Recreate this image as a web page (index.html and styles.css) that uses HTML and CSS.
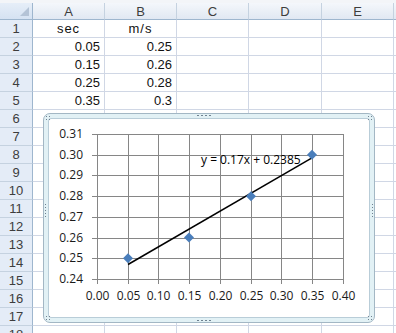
FILE: index.html
```html
<!DOCTYPE html>
<html lang="ja">
<head>
    <meta charset="UTF-8">
    <title>Book1 - Sheet1</title>
    <link rel="stylesheet" href="styles.css">
</head>
<body>
    <div class="sheet">
        <div class="corner"></div><div class="hd">A</div><div class="hd">B</div><div class="hd">C</div><div class="hd">D</div><div class="hd">E</div><div class="hd"></div>
        <div class="rh">1</div><div class="c ctr">sec</div><div class="c ctr">m/s</div><div class="c"></div><div class="c"></div><div class="c"></div><div class="c"></div>
        <div class="rh">2</div><div class="c num">0.05</div><div class="c num">0.25</div><div class="c"></div><div class="c"></div><div class="c"></div><div class="c"></div>
        <div class="rh">3</div><div class="c num">0.15</div><div class="c num">0.26</div><div class="c"></div><div class="c"></div><div class="c"></div><div class="c"></div>
        <div class="rh">4</div><div class="c num">0.25</div><div class="c num">0.28</div><div class="c"></div><div class="c"></div><div class="c"></div><div class="c"></div>
        <div class="rh">5</div><div class="c num">0.35</div><div class="c num">0.3</div><div class="c"></div><div class="c"></div><div class="c"></div><div class="c"></div>
        <div class="rh">6</div><div class="c"></div><div class="c"></div><div class="c"></div><div class="c"></div><div class="c"></div><div class="c"></div>
        <div class="rh">7</div><div class="c"></div><div class="c"></div><div class="c"></div><div class="c"></div><div class="c"></div><div class="c"></div>
        <div class="rh">8</div><div class="c"></div><div class="c"></div><div class="c"></div><div class="c"></div><div class="c"></div><div class="c"></div>
        <div class="rh">9</div><div class="c"></div><div class="c"></div><div class="c"></div><div class="c"></div><div class="c"></div><div class="c"></div>
        <div class="rh">10</div><div class="c"></div><div class="c"></div><div class="c"></div><div class="c"></div><div class="c"></div><div class="c"></div>
        <div class="rh">11</div><div class="c"></div><div class="c"></div><div class="c"></div><div class="c"></div><div class="c"></div><div class="c"></div>
        <div class="rh">12</div><div class="c"></div><div class="c"></div><div class="c"></div><div class="c"></div><div class="c"></div><div class="c"></div>
        <div class="rh">13</div><div class="c"></div><div class="c"></div><div class="c"></div><div class="c"></div><div class="c"></div><div class="c"></div>
        <div class="rh">14</div><div class="c"></div><div class="c"></div><div class="c"></div><div class="c"></div><div class="c"></div><div class="c"></div>
        <div class="rh">15</div><div class="c"></div><div class="c"></div><div class="c"></div><div class="c"></div><div class="c"></div><div class="c"></div>
        <div class="rh">16</div><div class="c"></div><div class="c"></div><div class="c"></div><div class="c"></div><div class="c"></div><div class="c"></div>
        <div class="rh">17</div><div class="c"></div><div class="c"></div><div class="c"></div><div class="c"></div><div class="c"></div><div class="c"></div>
        <div class="rh">18</div><div class="c"></div><div class="c"></div><div class="c"></div><div class="c"></div><div class="c"></div><div class="c"></div>
    </div>

    <div class="chart">
        <span class="grip grip-top"></span>
        <span class="grip grip-bottom"></span>
        <span class="grip grip-left"></span>
        <span class="grip grip-right"></span>
        <span class="grip-corner tl"></span>
        <span class="grip-corner tr"></span>
        <span class="grip-corner bl"></span>
        <span class="grip-corner br"></span>
        <div class="chart-inner">
            <svg class="plot" viewBox="49 119 320 198" width="320" height="198">
                <g class="grid">
                    <path d="M92 134.5H343.5M92 155.5H343.5M92 175.5H343.5M92 196.5H343.5M92 217.5H343.5M92 238.5H343.5M92 258.5H343.5M92 279.5H343.5"/>
                    <path d="M97.5 134V284M128.5 134V284M158.5 134V284M189.5 134V284M220.5 134V284M251.5 134V284M281.5 134V284M312.5 134V284M343.5 134V284"/>
                </g>
                <g class="ylab">
                    <text x="83" y="138">0.31</text>
                    <text x="83" y="159">0.30</text>
                    <text x="83" y="179">0.29</text>
                    <text x="83" y="200">0.28</text>
                    <text x="83" y="221">0.27</text>
                    <text x="83" y="242">0.26</text>
                    <text x="83" y="262">0.25</text>
                    <text x="83" y="283">0.24</text>
                </g>
                <g class="xlab">
                    <text x="97.5" y="300">0.00</text>
                    <text x="128.5" y="300">0.05</text>
                    <text x="158.5" y="300">0.10</text>
                    <text x="189.5" y="300">0.15</text>
                    <text x="220.5" y="300">0.20</text>
                    <text x="251.5" y="300">0.25</text>
                    <text x="281.5" y="300">0.30</text>
                    <text x="312.5" y="300">0.35</text>
                    <text x="343.5" y="300">0.40</text>
                </g>
                <line class="trend" x1="128" y1="264.5" x2="312" y2="157.8"/>
                <g class="points">
                    <path d="M128 253.3l5 5-5 5-5-5z"/>
                    <path d="M189 232.6l5 5-5 5-5-5z"/>
                    <path d="M251 191.2l5 5-5 5-5-5z"/>
                    <path d="M312 149.7l5 5-5 5-5-5z"/>
                </g>
                <text class="eq" x="201" y="164">y = 0.17x + 0.2385</text>
            </svg>
        </div>
    </div>
</body>
</html>
```

FILE: styles.css
```css
body {
    margin: 0;
    padding-top: 3px;
    width: 396px;
    height: 333px;
    overflow: hidden;
    background: #f3f5f8;
    font-family: "Liberation Sans", Arial, sans-serif;
    position: relative;
}

.sheet {
    display: grid;
    grid-template-columns: 33px 72px 72px 72px 73px 72px 72px;
    grid-template-rows: 17px;
    grid-auto-rows: 18px;
    background: #fff;
}

.corner, .hd, .rh, .c {
    box-sizing: border-box;
    border-right: 1px solid #d0d7e5;
    border-bottom: 1px solid #d0d7e5;
}

.corner {
    background: linear-gradient(#e6eef8, #d5e2f2);
    border-color: #9eb6ce;
    position: relative;
}

.corner::after {
    content: "";
    position: absolute;
    right: 3px;
    bottom: 3px;
    border-left: 9px solid transparent;
    border-bottom: 9px solid #b4c3d6;
}

.hd {
    background: linear-gradient(#f4f7fb, #e1e8f2);
    border-right-color: #c5d2e0;
    border-bottom-color: #9eb6ce;
    color: #3d3d3d;
    font-size: 13px;
    text-align: center;
    line-height: 17px;
}

.rh {
    background: #e4ecf7;
    border-right-color: #9eb6ce;
    border-bottom-color: #c5d2e0;
    color: #3d3d3d;
    font-size: 13px;
    text-align: center;
    line-height: 18px;
}

.c {
    font-size: 13px;
    line-height: 18px;
    color: #111;
    padding: 0 4px;
    white-space: nowrap;
}

.num {
    text-align: right;
}

.ctr {
    text-align: center;
    letter-spacing: 1px;
}

/* embedded chart object */
.chart {
    position: absolute;
    left: 43px;
    top: 113px;
    width: 332px;
    height: 210px;
    box-sizing: border-box;
    border: 1px solid #a3b7c4;
    border-radius: 7px;
    background: #e2f1f5;
    padding: 4px;
}

.chart-inner {
    height: 100%;
    box-sizing: border-box;
    border: 1px solid #b9cdd8;
    border-radius: 3px;
    background: #fff;
}

.plot {
    display: block;
    font-family: "Open Sans", "Noto Sans", sans-serif;
    font-size: 12px;
}

.grid path {
    fill: none;
    stroke: #868686;
    stroke-width: 1;
}

.ylab text {
    text-anchor: end;
    fill: #1a1a1a;
}

.xlab text {
    text-anchor: middle;
    fill: #1a1a1a;
}

.trend {
    stroke: #000;
    stroke-width: 1.5;
}

.points path {
    fill: #4a7ebb;
}

.eq {
    fill: #000;
}

.grip {
    position: absolute;
    background-image: radial-gradient(circle, #6f8190 0.8px, transparent 1px);
}

.grip-top, .grip-bottom {
    left: 152px;
    width: 16px;
    height: 3px;
    background-size: 4px 3px;
}

.grip-top { top: 0; }
.grip-bottom { bottom: 0; }

.grip-left, .grip-right {
    top: 89px;
    width: 3px;
    height: 14px;
    background-size: 3px 3px;
}

.grip-left { left: 0; }
.grip-right { right: 0; }

.grip-corner {
    position: absolute;
    width: 6px;
    height: 6px;
    background-image: radial-gradient(circle, #6f8190 0.8px, transparent 1px);
    background-size: 3px 3px;
}

.tl { left: 1px; top: 1px; }
.tr { right: 1px; top: 1px; }
.bl { left: 1px; bottom: 1px; }
.br { right: 1px; bottom: 1px; }
```
